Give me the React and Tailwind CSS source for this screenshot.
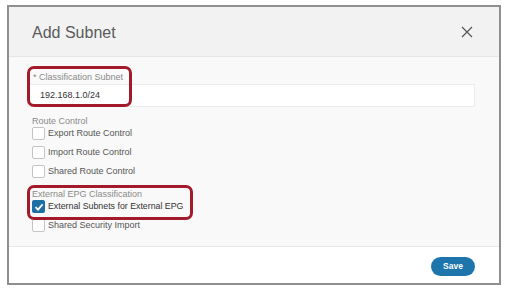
export default function App() {
  const font = { fontFamily: '"Liberation Sans", Arial, sans-serif' };
  const Box = ({ checked }) =>
    checked ? (
      <div className="w-[13px] h-[13px] bg-[#1d6fa5] rounded-[2px] flex items-center justify-center">
        <svg width="10" height="10" viewBox="0 0 10 10">
          <path d="M1.5 5.2 L4 7.6 L8.6 2.4" stroke="white" strokeWidth="1.8" fill="none" />
        </svg>
      </div>
    ) : (
      <div className="w-[13px] h-[13px] bg-white border border-[#c4c4c4] rounded-[2px]" />
    );
  const Row = ({ label, checked, dark }) => (
    <div className="flex items-center h-[19px] gap-[3px]">
      <Box checked={checked} />
      <span className={`${dark ? "text-[8.8px] text-[#333]" : "text-[9px] text-[#555]"}`}>{label}</span>
    </div>
  );
  return (
    <div className="w-[507px] h-[296px] bg-white relative" style={font}>
      <div className="absolute left-[7px] top-[5px] w-[494px] h-[280px] border-2 border-[#8f8f8f] flex flex-col bg-white">
        <div className="h-[50px] shrink-0 bg-[#f2f2f2] border-b border-[#e6e6e6] flex items-center justify-between pl-[23px] pr-[26px]">
          <span className="text-[16px] text-[#5b5b5b] pt-[2px]">Add Subnet</span>
          <svg width="12" height="12" viewBox="0 0 12 12">
            <path d="M1 1 L11 11 M11 1 L1 11" stroke="#555" strokeWidth="1.2" fill="none" />
          </svg>
        </div>
        <div className="h-[190px] bg-[#f9f9f9] border-b border-[#e6e6e6] pl-[18px] pr-[24px] pt-[15px]">
          <div className="text-[9px] text-[#8a8a8a] pl-[6px] leading-[10px]">* Classification Subnet</div>
          <div className="mt-[2px] h-[23px] bg-white border border-[#ececec] flex items-center pl-[12px] text-[9px] text-[#333]">
            192.168.1.0/24
          </div>
          <div className="pl-[5px] mt-[9px]">
            <div className="text-[9px] text-[#8a8a8a] leading-[10px]">Route Control</div>
            <div className="mt-[-2px]">
              <Row label="Export Route Control" />
              <Row label="Import Route Control" />
              <Row label="Shared Route Control" />
            </div>
            <div className="text-[9px] text-[#8a8a8a] leading-[10px] mt-[8px]">External EPG Classification</div>
            <div className="mt-[-2px]">
              <Row label="External Subnets for External EPG" checked dark />
              <Row label="Shared Security Import" />
            </div>
          </div>
        </div>
        <div className="flex-1 bg-white flex items-center justify-end pr-[24px] pt-[3px]">
          <div className="w-[44px] h-[19px] rounded-full bg-[#1d75ab] text-white text-[8.5px] font-semibold flex items-center justify-center">
            Save
          </div>
        </div>
      </div>
      <div className="absolute left-[27px] top-[66px] w-[105px] h-[41px] border-[3px] border-[#a31b2b] rounded-[7px]" />
      <div className="absolute left-[27px] top-[185px] w-[166px] h-[35px] border-[3px] border-[#a31b2b] rounded-[7px]" />
    </div>
  );
}
